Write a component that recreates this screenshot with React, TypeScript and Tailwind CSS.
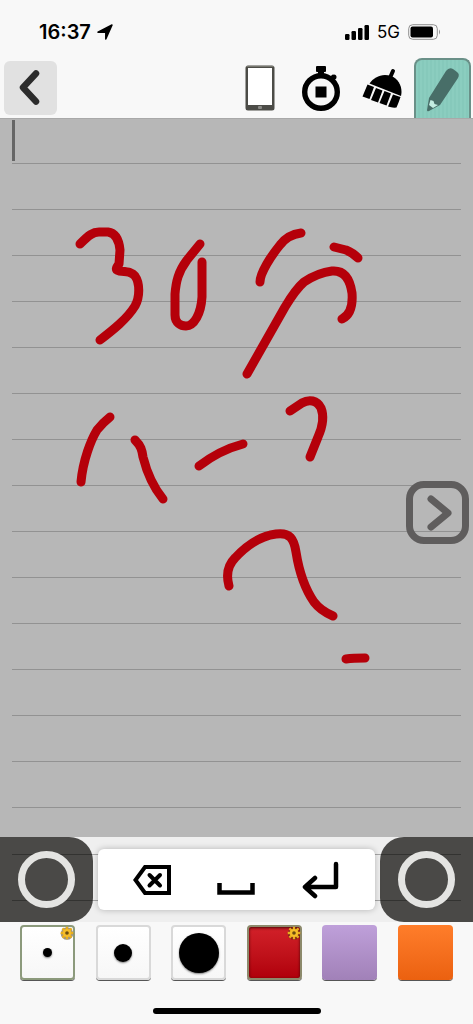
import { useState } from "react";
import clsx from "clsx";

const strokes = [
  "M80 244 C89 235 93 232 99 232 L108 232 C116 233 119 240 120 250 L119 264 C116 268 115 270 119 271 C128 272 132 272 135 276 C140 283 140 297 135 306 C127 319 113 330 100 340",
  "M200 244 L187 260 C178 272 176 282 175 294 L175 315 C175 323 181 326 186 326 C194 326 201 314 202 297 L202 262",
  "M260 282 C260 273 271 256 280 245 C286 237 293 234 301 233",
  "M334 247 L346 250 C351 252 354 254 358 258",
  "M247 374 L285 307 C291 297 297 288 304 282 C313 276 324 272 332 271 C344 270 350 279 352 293 C353 306 350 315 342 319",
  "M81 482 C83 460 91 440 97 430 C101 425 105 421 110 417",
  "M135 440 C141 446 142 450 143 457 C147 473 154 488 163 499",
  "M199 466 C212 456 224 449 243 444",
  "M290 411 L302 403 C309 399 317 400 321 408 C325 418 322 428 318 437 L310 457",
  "M229 586 C226 575 228 565 235 558 C247 545 260 536 276 534 C290 532 294 539 296 552 C299 571 305 589 314 602 C320 610 326 613 333 616",
  "M346 659 C353 658 360 658 365 658",
];

const PhoneIcon = () => (
  <svg className="h-[46px] w-[30px]" viewBox="0 0 30 46">
    <rect x="0.5" y="0.5" width="29" height="45" rx="2.5" fill="#4c4c47" />
    <rect x="3" y="3" width="24" height="37" fill="#fff" />
    <path d="M1 1.5H29" stroke="#77776f" />
    <rect x="13" y="41" width="4" height="3" rx="1" fill="#8a8a86" />
  </svg>
);

const StopwatchIcon = () => (
  <svg className="h-[45px] w-[38px]" viewBox="0 0 38 45">
    <circle cx="19" cy="26" r="16.3" fill="none" stroke="#000" strokeWidth="5.400" />
    <rect x="14" y="0" width="10" height="6" rx="1" />
    <rect x="16" y="5" width="6" height="5" />
    <path d="M28 13L32 10" stroke="#000" strokeWidth="4" />
    <circle cx="32" cy="11" r="2.5" />
    <rect x="13.500" y="20.500" width="11" height="11" />
  </svg>
);

const BroomIcon = () => (
  <svg className="h-[40px] w-[40px]" viewBox="0 0 40 40">
    <path d="M27 12L31 3" stroke="#000" strokeWidth="4" strokeLinecap="round" />
    <path d="M7.500 15.500C12 9 20 5 29 8C37 11 41 20 39 28Z" />
    <path d="M5.500 16.500L12 19L7.500 31L0.500 28.500ZM14 20L20.500 22.500L16 34.500L9 32ZM22.500 23L29 25.500L24.500 37.500L17.500 35ZM31 26.500L38.500 29Q36.500 35 34.500 39.500Q30 40 26 38.500Z" />
  </svg>
);

const PencilIcon = () => (
  <svg className="h-[45px] w-[34px]" viewBox="0 0 34 45">
    <path
      d="M1 43L3 31L20 4Q23 0 27 2L31 5Q34 7 32 11L14 38L3 44Q1 45 1 43Z"
      fill="#486e68"
    />
    <path d="M4.500 33L7.500 34L8.500 37L12 38L7 41L3 38Z" fill="#c3ece1" />
  </svg>
);

const GearIcon = () => (
  <svg
    className="absolute -top-0.5 -right-0.5 h-4 w-4"
    viewBox="0 0 14 14"
  >
    <circle cx="7" cy="7.500" r="5.500" fill="#3d2c0c" opacity="0.5" />
    <path
      d="M7 1.500V12.500M1.500 7H12.500M3 3L11 11M11 3L3 11"
      stroke="#e8ad1d"
      strokeWidth="2"
    />
    <circle cx="7" cy="7" r="2.600" fill="#6b4b10" stroke="#f5bd28" strokeWidth="2" />
  </svg>
);

const pens = [
  { name: "Thin", dot: "size-[9px]" },
  { name: "Medium", dot: "size-[18px]" },
  { name: "Thick", dot: "size-[40px]" },
];

const colors = [
  { name: "Red", fill: "from-[#d22029] to-[#b0000a]" },
  { name: "Purple", fill: "from-[#bfa0da] to-[#a181b8]" },
  { name: "Orange", fill: "from-[#ff7d2a] to-[#eb610f]" },
];

const StatusBar = () => (
  <div className="flex h-[58px] items-center justify-between pt-1.5 pr-8 pl-[39px]">
    <div className="flex items-center gap-1.5">
      <span className="text-[20px] font-semibold leading-6">16:37</span>
      <svg className="h-4 w-4" viewBox="0 0 16 16">
        <path
          d="M15 1L8.800 15V8.200H1Z"
          stroke="#000"
          strokeWidth="1.500"
          strokeLinejoin="round"
        />
      </svg>
    </div>
    <div className="flex items-center gap-2">
      <svg className="h-4 w-6" viewBox="0 0 24 16">
        <rect x="0" y="10" width="4.500" height="6" rx="1.2" />
        <rect x="6.500" y="7" width="4.500" height="9" rx="1.2" />
        <rect x="13" y="4" width="4.500" height="12" rx="1.2" />
        <rect x="19.500" y="1" width="4.500" height="15" rx="1.2" />
      </svg>
      <span className="text-[17px] leading-6">5G</span>
      <svg className="h-4 w-[33px]" viewBox="0 0 33 16">
        <rect x="0.700" y="0.700" width="28.600" height="14.600" rx="4" fill="none" stroke="#8f8f8f" />
        <rect x="2.500" y="2.500" width="22.500" height="11" rx="2" />
        <path d="M31 5.500Q33 8 31 10.500Z" fill="#8f8f8f" />
      </svg>
    </div>
  </div>
);

const RingButton = ({ label, className }: { label: string; className: string }) => (
  <button
    aria-label={label}
    className={clsx("flex w-[93px] items-center justify-center bg-[#4a4947]", className)}
  >
    <span className="relative z-10 size-[57px] rounded-full border-[7px] border-[#e4e4e2] bg-[#4a4947]" />
  </button>
);

const App = () => {
  const [tool, setTool] = useState("pencil");
  const [pen, setPen] = useState("Thin");
  const [color, setColor] = useState("Red");

  const tools = [
    { id: "phone", icon: <PhoneIcon /> },
    { id: "timer", icon: <StopwatchIcon /> },
    { id: "clean", icon: <BroomIcon /> },
    { id: "pencil", icon: <PencilIcon /> },
  ];

  return (
    <div className="flex min-h-screen flex-col bg-[#f8f8f8] font-['Inter',sans-serif] text-black">
      <StatusBar />

      {/* TOOLBAR */}
      <header className="flex h-[60px] items-center justify-between pr-0.5 pl-1">
        <button
          aria-label="Back"
          className="flex h-[54px] w-[53px] items-center justify-center rounded-md bg-[#e1e1e1]"
        >
          <svg className="h-9 w-6" viewBox="0 0 24 36">
            <path
              d="M17 3.500L4 17.500L17 31.500"
              fill="none"
              stroke="#2c2c2c"
              strokeWidth="6.500"
              strokeLinecap="round"
              strokeLinejoin="round"
            />
          </svg>
        </button>
        <div className="flex h-full gap-1">
          {tools.map((t) => (
            <button
              key={t.id}
              aria-label={t.id}
              aria-pressed={tool === t.id}
              onClick={() => setTool(t.id)}
              className={clsx(
                "flex w-[57px] items-center justify-center",
                tool === t.id &&
                  "rounded-t-lg border-2 border-b-0 border-[#6a9088] bg-[repeating-linear-gradient(90deg,#8bcdbf_0_2px,#86c9bb_2px_4px)]",
              )}
            >
              {t.icon}
            </button>
          ))}
        </div>
      </header>

      {/* CANVAS */}
      <main className="relative min-h-[719px] flex-1 overflow-hidden border-t border-[#a9a9a9] bg-[#b7b7b7] px-3">
        <div className="absolute inset-x-3 inset-y-0 bg-[repeating-linear-gradient(180deg,transparent_0_44px,#929292_44px_45px,transparent_45px_46px)]" />
        <div className="relative mt-px h-[41px] w-[3px] bg-[#666]" />
        <svg
          className="absolute inset-x-0 top-0 w-full"
          viewBox="0 119 473 718"
          fill="none"
          stroke="#b5000a"
          strokeWidth="9"
          strokeLinecap="round"
          strokeLinejoin="round"
        >
          {strokes.map((d) => (
            <path key={d} d={d} />
          ))}
        </svg>
        <button
          aria-label="Next page"
          className="absolute top-[362px] right-1 flex size-[63px] items-center justify-center rounded-[18px] border-[7px] border-[#5f5d5d]"
        >
          <svg className="h-9 w-7" viewBox="0 0 28 36">
            <path
              d="M7 4L24 18L7 32"
              fill="none"
              stroke="#5f5d5d"
              strokeWidth="7"
              strokeLinecap="round"
              strokeLinejoin="round"
            />
          </svg>
        </button>
      </main>

      {/* KEYS */}
      <div className="relative flex h-[85px] justify-between bg-[#efefef]">
        <RingButton label="Left pad" className="rounded-r-3xl" />
        <div className="pointer-events-none absolute inset-x-3 top-[17px] h-[47px] border-y border-black/30" />
        <div className="relative z-10 mx-[5px] my-3 flex flex-1 items-center justify-around rounded-md bg-white px-3 shadow-[0_0_6px_rgba(0,0,0,0.25)]">
          <button aria-label="Delete">
            <svg className="h-[30px] w-[38px]" viewBox="0 0 38 30" fill="none" stroke="#000" strokeWidth="4">
              <path d="M36 2H12L2.500 15L12 28H36Z" />
              <path d="M16.500 10L27 20.500M27 10L16.500 20.500" strokeLinecap="round" />
            </svg>
          </button>
          <button aria-label="Space">
            <svg className="h-[30px] w-[38px]" viewBox="0 0 38 30" fill="none" stroke="#000" strokeWidth="4.500">
              <path d="M2.500 18V27.500H35.500V18" />
            </svg>
          </button>
          <button aria-label="Enter">
            <svg
              className="h-[38px] w-[38px]"
              viewBox="0 0 38 38"
              fill="none"
              stroke="#000"
              strokeWidth="4.500"
              strokeLinecap="round"
            >
              <path d="M34 3V26H3M13 17L3 26L13 35" strokeLinejoin="round" />
            </svg>
          </button>
        </div>
        <RingButton label="Right pad" className="rounded-l-3xl" />
      </div>

      {/* PALETTE */}
      <footer className="flex h-[102px] flex-col items-center justify-between pt-[3px] pb-2.5">
        <div className="flex w-full justify-between px-5">
          {pens.map((p) => (
            <button
              key={p.name}
              aria-label={p.name}
              aria-pressed={pen === p.name}
              onClick={() => setPen(p.name)}
              className={clsx(
                "relative flex size-[55px] items-center justify-center rounded-sm border-2 bg-linear-to-b from-white to-[#f7f7f7] shadow-[0_1px_0_#555]",
                pen === p.name ? "border-[#8c9a7c]" : "border-[#d9d9d9]",
              )}
            >
              <span className={clsx("rounded-full bg-black shadow-[0_1px_2px_rgba(0,0,0,0.5)]", p.dot)} />
              {pen === p.name && <GearIcon />}
            </button>
          ))}
          {colors.map((c) => (
            <button
              key={c.name}
              aria-label={c.name}
              aria-pressed={color === c.name}
              onClick={() => setColor(c.name)}
              className={clsx(
                "relative size-[55px] rounded-sm bg-linear-to-b shadow-[0_1px_0_#555]",
                c.fill,
                color === c.name &&
                  "border-2 border-[#8c8a6c] inset-shadow-[0_1px_3px_rgba(60,0,0,0.9)]",
              )}
            >
              {color === c.name && <GearIcon />}
            </button>
          ))}
        </div>
        <div className="h-1.5 w-[168px] rounded-full bg-black" />
      </footer>
    </div>
  );
};

export default App;
